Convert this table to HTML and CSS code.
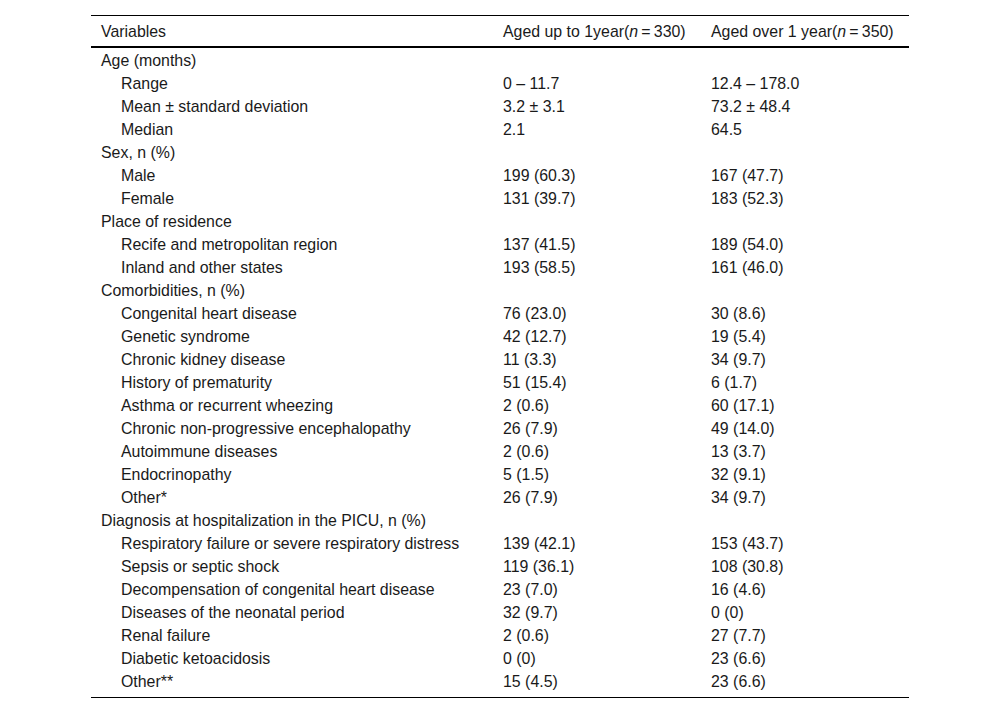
FILE: index.html
```html
<!DOCTYPE html>
<html lang="en">
<head>
<meta charset="utf-8">
<title>Table</title>
<link rel="stylesheet" href="styles.css">
</head>
<body>
<div class="wrap">
<table class="data">
<thead>
<tr><th>Variables</th><th>Aged up to 1year(<i>n</i>&thinsp;=&thinsp;330)</th><th>Aged over 1 year(<i>n</i>&thinsp;=&thinsp;350)</th></tr>
</thead>
<tbody>
<tr class="first"><td>Age (months)</td><td></td><td></td></tr>
<tr><td class="ind">Range</td><td>0 – 11.7</td><td>12.4 – 178.0</td></tr>
<tr><td class="ind">Mean ± standard deviation</td><td>3.2 ± 3.1</td><td>73.2 ± 48.4</td></tr>
<tr><td class="ind">Median</td><td>2.1</td><td>64.5</td></tr>
<tr><td>Sex, n (%)</td><td></td><td></td></tr>
<tr><td class="ind">Male</td><td>199 (60.3)</td><td>167 (47.7)</td></tr>
<tr><td class="ind">Female</td><td>131 (39.7)</td><td>183 (52.3)</td></tr>
<tr><td>Place of residence</td><td></td><td></td></tr>
<tr><td class="ind">Recife and metropolitan region</td><td>137 (41.5)</td><td>189 (54.0)</td></tr>
<tr><td class="ind">Inland and other states</td><td>193 (58.5)</td><td>161 (46.0)</td></tr>
<tr><td>Comorbidities, n (%)</td><td></td><td></td></tr>
<tr><td class="ind">Congenital heart disease</td><td>76 (23.0)</td><td>30 (8.6)</td></tr>
<tr><td class="ind">Genetic syndrome</td><td>42 (12.7)</td><td>19 (5.4)</td></tr>
<tr><td class="ind">Chronic kidney disease</td><td>11 (3.3)</td><td>34 (9.7)</td></tr>
<tr><td class="ind">History of prematurity</td><td>51 (15.4)</td><td>6 (1.7)</td></tr>
<tr><td class="ind">Asthma or recurrent wheezing</td><td>2 (0.6)</td><td>60 (17.1)</td></tr>
<tr><td class="ind">Chronic non-progressive encephalopathy</td><td>26 (7.9)</td><td>49 (14.0)</td></tr>
<tr><td class="ind">Autoimmune diseases</td><td>2 (0.6)</td><td>13 (3.7)</td></tr>
<tr><td class="ind">Endocrinopathy</td><td>5 (1.5)</td><td>32 (9.1)</td></tr>
<tr><td class="ind">Other*</td><td>26 (7.9)</td><td>34 (9.7)</td></tr>
<tr><td>Diagnosis at hospitalization in the PICU, n (%)</td><td></td><td></td></tr>
<tr><td class="ind">Respiratory failure or severe respiratory distress</td><td>139 (42.1)</td><td>153 (43.7)</td></tr>
<tr><td class="ind">Sepsis or septic shock</td><td>119 (36.1)</td><td>108 (30.8)</td></tr>
<tr><td class="ind">Decompensation of congenital heart disease</td><td>23 (7.0)</td><td>16 (4.6)</td></tr>
<tr><td class="ind">Diseases of the neonatal period</td><td>32 (9.7)</td><td>0 (0)</td></tr>
<tr><td class="ind">Renal failure</td><td>2 (0.6)</td><td>27 (7.7)</td></tr>
<tr><td class="ind">Diabetic ketoacidosis</td><td>0 (0)</td><td>23 (6.6)</td></tr>
<tr class="last"><td class="ind">Other**</td><td>15 (4.5)</td><td>23 (6.6)</td></tr>
</tbody>
</table>
</div>
</body>
</html>
```
FILE: styles.css
```css
html, body {
  margin: 0;
  padding: 0;
  background: #fff;
}
.wrap {
  padding: 15px 0 0 91px;
}
.data {
  width: 818px;
  border-collapse: collapse;
  font-family: "Liberation Sans", Arial, sans-serif;
  font-size: 15.9px;
  color: #1a1a1a;
  border-top: 1px solid #000;
  border-bottom: 1px solid #000;
}
.data th {
  font-weight: normal;
  text-align: left;
  height: 29px;
  padding: 1px 10px 0;
  border-bottom: 2px solid #000;
  vertical-align: middle;
  line-height: 18px;
}
.data th:nth-child(1) { width: 382px; }
.data th:nth-child(2) { width: 188px; }
.data th:nth-child(3) { width: 188px; }
.data td {
  height: 23px;
  padding: 0 10px;
  line-height: 23px;
  vertical-align: middle;
  white-space: nowrap;
}
.data tr.first td {
  padding-top: 1px;
}
.data td.ind {
  padding-left: 30px;
}
.data tr.last td {
  padding-bottom: 4px;
}
```
